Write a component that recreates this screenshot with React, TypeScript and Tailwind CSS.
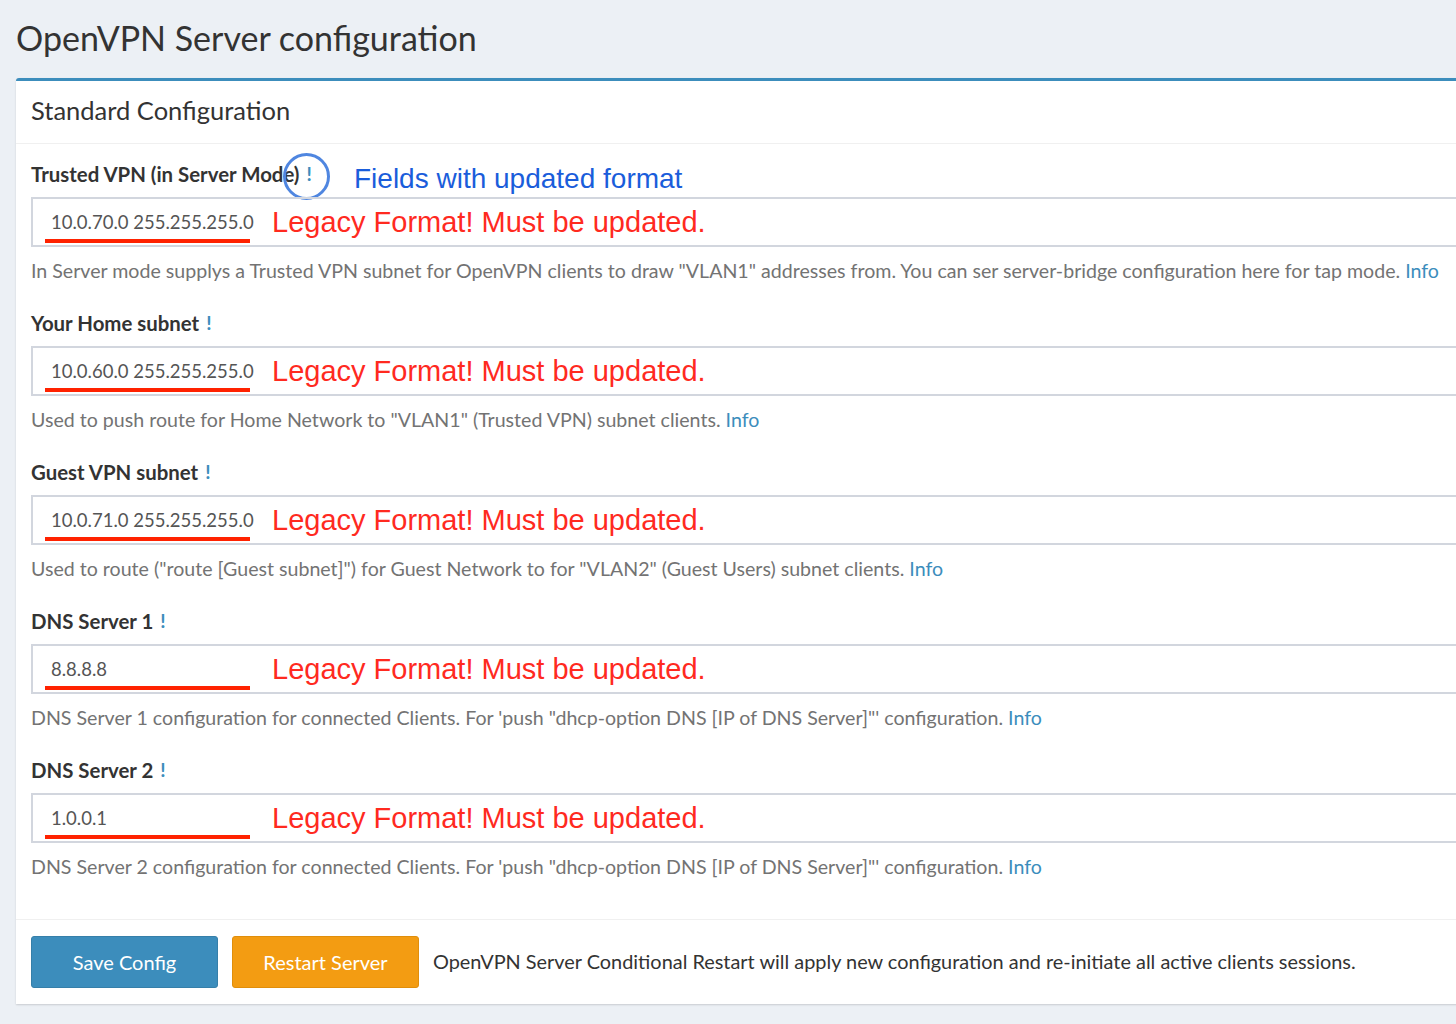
import React from "react";

const fields = [
  {
    label: "Trusted VPN (in Server Mode)",
    value: "10.0.70.0 255.255.255.0",
    help: 'In Server mode supplys a Trusted VPN subnet for OpenVPN clients to draw "VLAN1" addresses from. You can ser server-bridge configuration here for tap mode.',
    note: true,
  },
  {
    label: "Your Home subnet",
    value: "10.0.60.0 255.255.255.0",
    help: 'Used to push route for Home Network to "VLAN1" (Trusted VPN) subnet clients.',
  },
  {
    label: "Guest VPN subnet",
    value: "10.0.71.0 255.255.255.0",
    help: 'Used to route ("route [Guest subnet]") for Guest Network to for "VLAN2" (Guest Users) subnet clients.',
  },
  {
    label: "DNS Server 1",
    value: "8.8.8.8",
    help: "DNS Server 1 configuration for connected Clients. For 'push \"dhcp-option DNS [IP of DNS Server]\"' configuration.",
  },
  {
    label: "DNS Server 2",
    value: "1.0.0.1",
    help: "DNS Server 2 configuration for connected Clients. For 'push \"dhcp-option DNS [IP of DNS Server]\"' configuration.",
  },
];

const sans = "font-['Lato','Open_Sans',sans-serif]";
const arial = "font-['Liberation_Sans',Arial,sans-serif]";

function Field({ f }: { f: (typeof fields)[number] }) {
  return (
    <div className="mb-[28px]">
      <div className="relative h-[24px] mb-[11px] flex items-center">
        <span className="text-[20.4px] font-bold text-[#333]">{f.label}</span>
        <span className="ml-[7px] text-[19px] font-bold text-[#3c8dbc]">!</span>
        {f.note && (
          <>
            <div className="absolute left-[252px] top-[-9px] w-[47px] h-[47px] rounded-full border-[3px] border-[#4f86e0]" />
            <span className={`absolute left-[323px] top-[2px] ${arial} text-[28px] leading-[30px] text-[#1a5ddb] whitespace-nowrap`}>
              Fields with updated format
            </span>
          </>
        )}
      </div>
      <div className="relative h-[50px] border-2 border-[#d2d6de] flex items-center pl-[18px] pt-[2px] text-[18.5px] text-[#555]">
        {f.value}
        <div className="absolute left-[12px] top-[40px] w-[205px] h-[4px] bg-[#ff2200]" />
        <span className={`absolute left-[239px] top-[7px] ${arial} text-[29px] leading-[32px] text-[#ff2a1f] whitespace-nowrap`}>
          Legacy Format! Must be updated.
        </span>
      </div>
      <p className="mt-[12px] h-[24px] leading-[24px] text-[19.6px] text-[#737373] whitespace-nowrap">
        {f.help} <span className="text-[#3c8dbc]">Info</span>
      </p>
    </div>
  );
}

export default function App() {
  return (
    <div className={`min-h-screen w-[1456px] overflow-hidden bg-[#ecf0f5] ${sans}`}>
      <h1 className="px-[16px] pt-[16px] h-[78px] text-[34px] leading-[44px] text-[#333]">
        OpenVPN Server configuration
      </h1>
      <div className="ml-[16px] w-[1500px] bg-white border-t-[3px] border-[#3c8dbc] rounded-t-[3px] shadow-[0_1px_2px_rgba(0,0,0,0.15)]">
        <div className="h-[63px] px-[15px] pb-[4px] flex items-center border-b border-[#f0f0f0]">
          <h3 className="text-[25.5px] text-[#333]">Standard Configuration</h3>
        </div>
        <div className="pt-[18px] pb-[12px] px-[15px]">
          {fields.map((f, i) => (
            <Field key={i} f={f} />
          ))}
        </div>
        <div className="border-t border-[#f0f0f0] pt-[16px] pb-[16px] px-[15px] flex items-center gap-[14px]">
          <button className="w-[187px] h-[52px] rounded-[3px] bg-[#3c8dbc] border border-[#367fa9] text-white text-[20px]">
            Save Config
          </button>
          <button className="w-[187px] h-[52px] rounded-[3px] bg-[#f39c12] border border-[#e08e0b] text-white text-[20px]">
            Restart Server
          </button>
          <span className="text-[19.9px] text-[#333] whitespace-nowrap">
            OpenVPN Server Conditional Restart will apply new configuration and re-initiate all active clients sessions.
          </span>
        </div>
      </div>
    </div>
  );
}
